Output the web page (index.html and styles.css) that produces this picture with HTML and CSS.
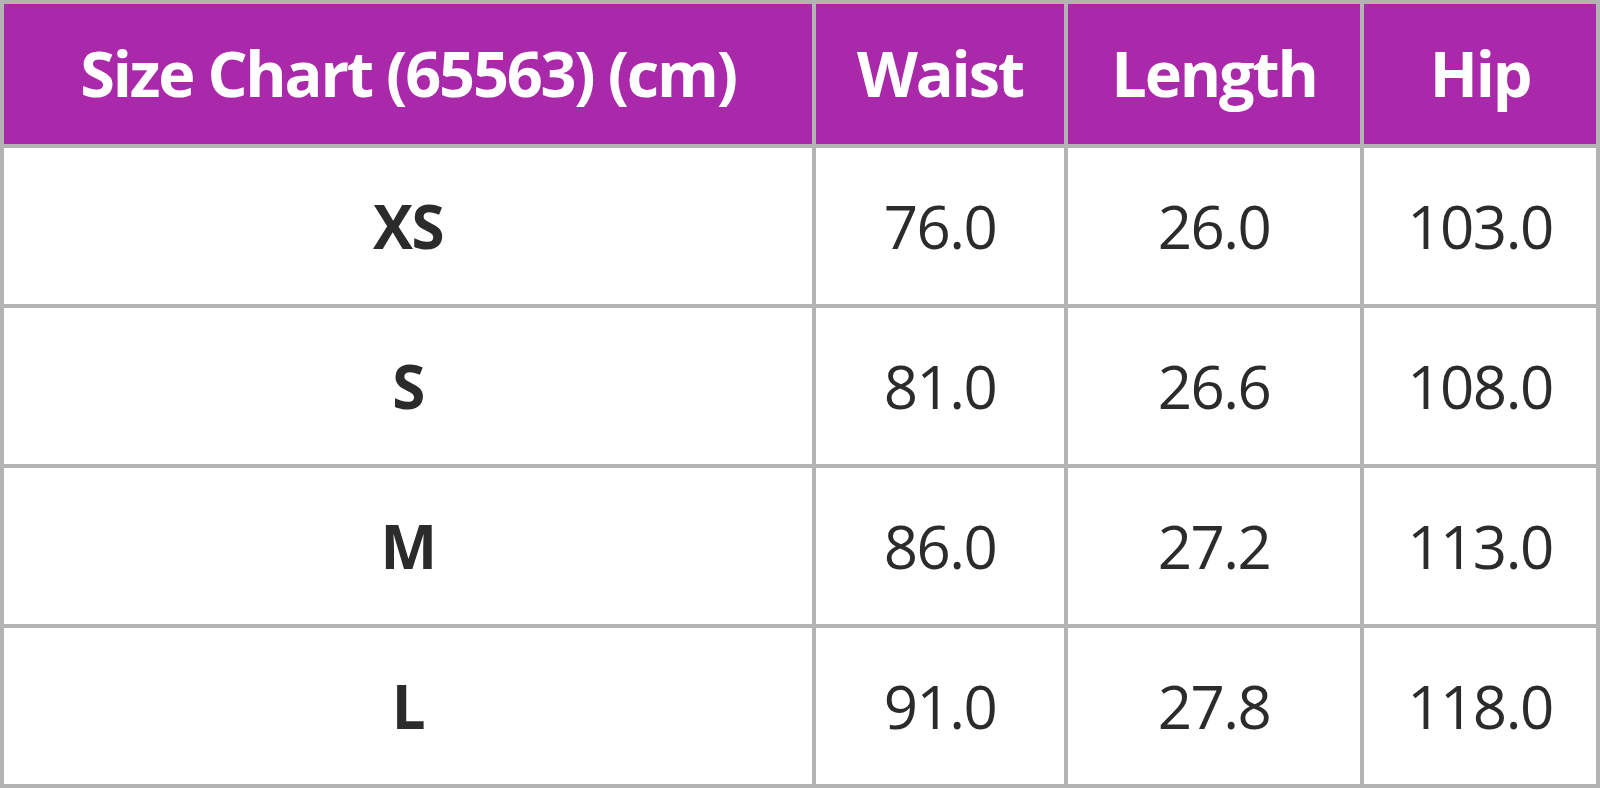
FILE: index.html
```html
<!DOCTYPE html>
<html lang="en">
<head>
<meta charset="utf-8">
<title>Size Chart</title>
<link rel="stylesheet" href="styles.css">
</head>
<body>
<table class="chart">
  <colgroup>
    <col class="c-size">
    <col class="c-waist">
    <col class="c-length">
    <col class="c-hip">
  </colgroup>
  <thead>
    <tr class="head-row">
      <th>Size Chart (65563) (cm)</th>
      <th>Waist</th>
      <th>Length</th>
      <th>Hip</th>
    </tr>
  </thead>
  <tbody>
    <tr class="row"><th>XS</th><td>76.0</td><td>26.0</td><td>103.0</td></tr>
    <tr class="row"><th>S</th><td>81.0</td><td>26.6</td><td>108.0</td></tr>
    <tr class="row"><th>M</th><td>86.0</td><td>27.2</td><td>113.0</td></tr>
    <tr class="row"><th>L</th><td>91.0</td><td>27.8</td><td>118.0</td></tr>
  </tbody>
</table>
</body>
</html>
```
FILE: styles.css
```css
html, body {
  margin: 0;
  padding: 0;
  background: #ffffff;
}
body {
  font-family: "Open Sans", "Noto Sans", "Liberation Sans", sans-serif;
}
.chart {
  width: 1600px;
  height: 788px;
  table-layout: fixed;
  border-collapse: separate;
  border-spacing: 4px;
  background: #b3b3b3;
}
.c-size { width: 808px; }
.c-waist { width: 248px; }
.c-length { width: 292px; }
.c-hip { width: 232px; }
.chart th, .chart td {
  padding: 0;
  text-align: center;
  vertical-align: middle;
  background: #ffffff;
  color: #2b2b2b;
  font-size: 60px;
  letter-spacing: -1.5px;
  line-height: 1;
}
.chart tbody th {
  font-weight: 700;
}
.chart td {
  font-weight: 400;
}
.head-row { height: 140px; }
.head-row th {
  background: #aa28aa;
  color: #ffffff;
  font-weight: 700;
  font-size: 63px;
  letter-spacing: -2.2px;
  padding-bottom: 4px;
}
.row { height: 156px; }
```
